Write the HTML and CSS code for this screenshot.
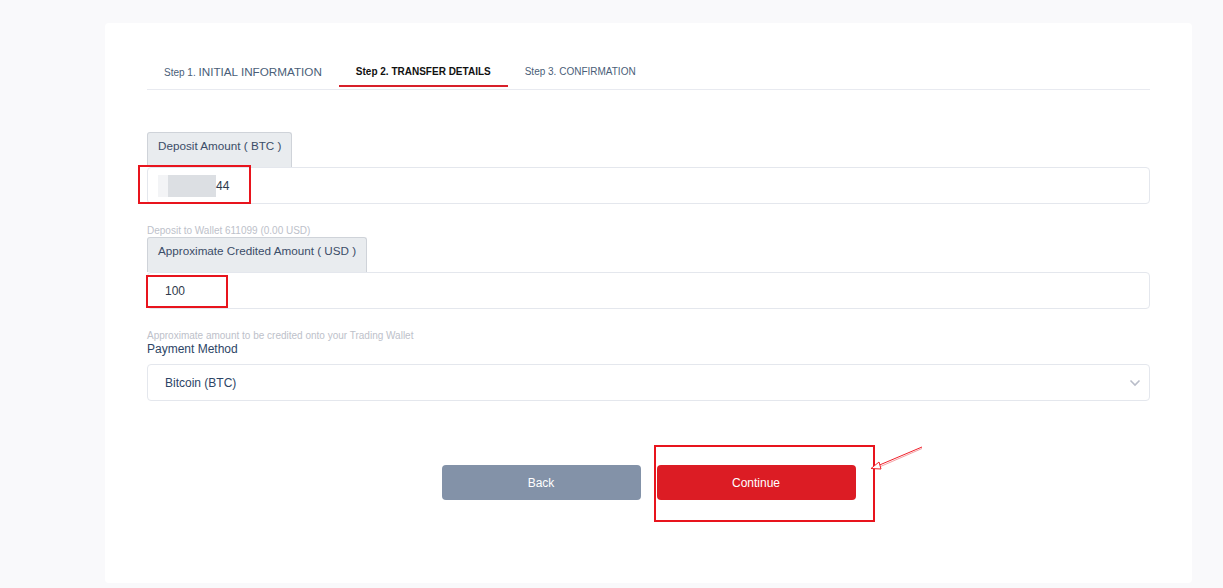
FILE: index.html
```html
<!DOCTYPE html>
<html lang="en">
<head>
    <meta charset="UTF-8">
    <meta name="viewport" content="width=device-width, initial-scale=1.0">
    <title>Deposit - Transfer Details</title>
    <link rel="stylesheet" href="styles.css">
</head>
<body>
    <div class="card">
        <div class="steps">
            <div class="step"><span class="step-no">Step 1.</span> <span class="step-big">INITIAL INFORMATION</span></div>
            <div class="step active">Step 2. TRANSFER DETAILS</div>
            <div class="step">Step 3. CONFIRMATION</div>
        </div>

        <div class="form">
            <div class="field">
                <div class="label-box">Deposit Amount ( BTC )</div>
                <div class="input">
                    <span class="blur blur-a"></span><span class="blur blur-b"></span><span>44</span>
                </div>
            </div>
            <div class="hint">Deposit to Wallet 611099 (0.00 USD)</div>

            <div class="field">
                <div class="label-box">Approximate Credited Amount ( USD )</div>
                <div class="input">100</div>
            </div>
            <div class="hint">Approximate amount to be credited onto your Trading Wallet</div>

            <div class="field">
                <div class="label-plain">Payment Method</div>
                <div class="input select">
                    <span>Bitcoin (BTC)</span>
                    <svg class="chevron" width="12" height="8" viewBox="0 0 12 8">
                        <path d="M1.5 1.5 L6 6 L10.5 1.5" fill="none" stroke="#b9bdc9" stroke-width="1.6"/>
                    </svg>
                </div>
            </div>
        </div>

        <div class="actions">
            <button class="btn btn-back">Back</button>
            <button class="btn btn-continue">Continue</button>
        </div>
    </div>

    <!-- annotation marks drawn over the screenshot -->
    <div class="mark mark-1"></div>
    <div class="mark mark-2"></div>
    <div class="mark mark-3"></div>
    <svg class="arrow" width="60" height="30" viewBox="0 0 60 30">
        <path d="M56 2 L10 21.5" stroke="#f0202a" stroke-width="1" fill="none"/>
        <path d="M56 3.5 L11 23" stroke="#f5a0a4" stroke-width="1" fill="none"/>
        <path d="M5 23.5 L13 17 L15 24 Z" fill="#fff" stroke="#f0202a" stroke-width="1"/>
    </svg>
</body>
</html>
```

FILE: styles.css
```css
* {
    margin: 0;
    padding: 0;
    box-sizing: border-box;
}

body {
    font-family: 'Liberation Sans', Arial, sans-serif;
    background: #f9f9fb;
    min-height: 588px;
    position: relative;
    padding-top: 23px;
}

.card {
    margin-left: 105px;
    width: 1087px;
    height: 560px;
    background: #fff;
    border-radius: 4px;
    padding: 30px 42px 0;
}

/* steps tabs */
.steps {
    display: flex;
    border-bottom: 1px solid #e8eaf0;
    padding-bottom: 2px;
}

.step {
    padding: 11px 17px 4px;
    line-height: 16px;
    font-size: 10px;
    color: #4a5e78;
    border-bottom: 2px solid transparent;
}

.step-no {
    font-size: 10px;
}

.step-big {
    font-size: 11.7px;
}

.step.active {
    color: #111;
    font-weight: bold;
    border-bottom-color: #d8202a;
}

/* form */
.form {
    padding-top: 42px;
}

.field {
    display: flex;
    flex-direction: column;
    align-items: flex-start;
}

.label-box {
    background: #e9ecef;
    border: 1px solid #cfd3d9;
    border-bottom: none;
    border-radius: 3px 3px 0 0;
    padding: 4px 10px 12px;
    line-height: 18px;
    font-size: 11.7px;
    color: #3b4d68;
}

.input {
    width: 100%;
    height: 37px;
    border: 1px solid #e4e7ed;
    border-radius: 4px;
    display: flex;
    align-items: center;
    padding: 0 17px;
    font-size: 12px;
    color: #2f3a4c;
}

.blur {
    display: inline-block;
    height: 22px;
}

.blur-a {
    width: 10px;
    margin-left: -7px;
    background: #f3f4f6;
}

.blur-b {
    width: 48px;
    background: #dcdfe3;
}

.hint {
    font-size: 10px;
    color: #bdc1ca;
    line-height: 12px;
    margin-top: 21px;
}

.label-plain {
    font-size: 12px;
    color: #2d4566;
    line-height: 14px;
    margin-bottom: 8px;
}

.select {
    justify-content: space-between;
    color: #2d4566;
}

.chevron {
    margin-right: -9px;
}

/* buttons */
.actions {
    display: flex;
    justify-content: center;
    gap: 16px;
    margin-top: 64px;
}

.btn {
    width: 199px;
    height: 35px;
    border: none;
    border-radius: 4px;
    color: #fff;
    font-family: inherit;
    font-size: 12px;
}

.btn-back {
    background: #8392a8;
}

.btn-continue {
    background: #dc1c24;
}

/* annotations */
.mark {
    position: absolute;
    border: 2px solid #e8141d;
}

.mark-1 {
    left: 138px;
    top: 165px;
    width: 113px;
    height: 39px;
}

.mark-2 {
    left: 146px;
    top: 275px;
    width: 82px;
    height: 33px;
}

.mark-3 {
    left: 654px;
    top: 445px;
    width: 221px;
    height: 77px;
}

.arrow {
    position: absolute;
    left: 866px;
    top: 445px;
}
```
